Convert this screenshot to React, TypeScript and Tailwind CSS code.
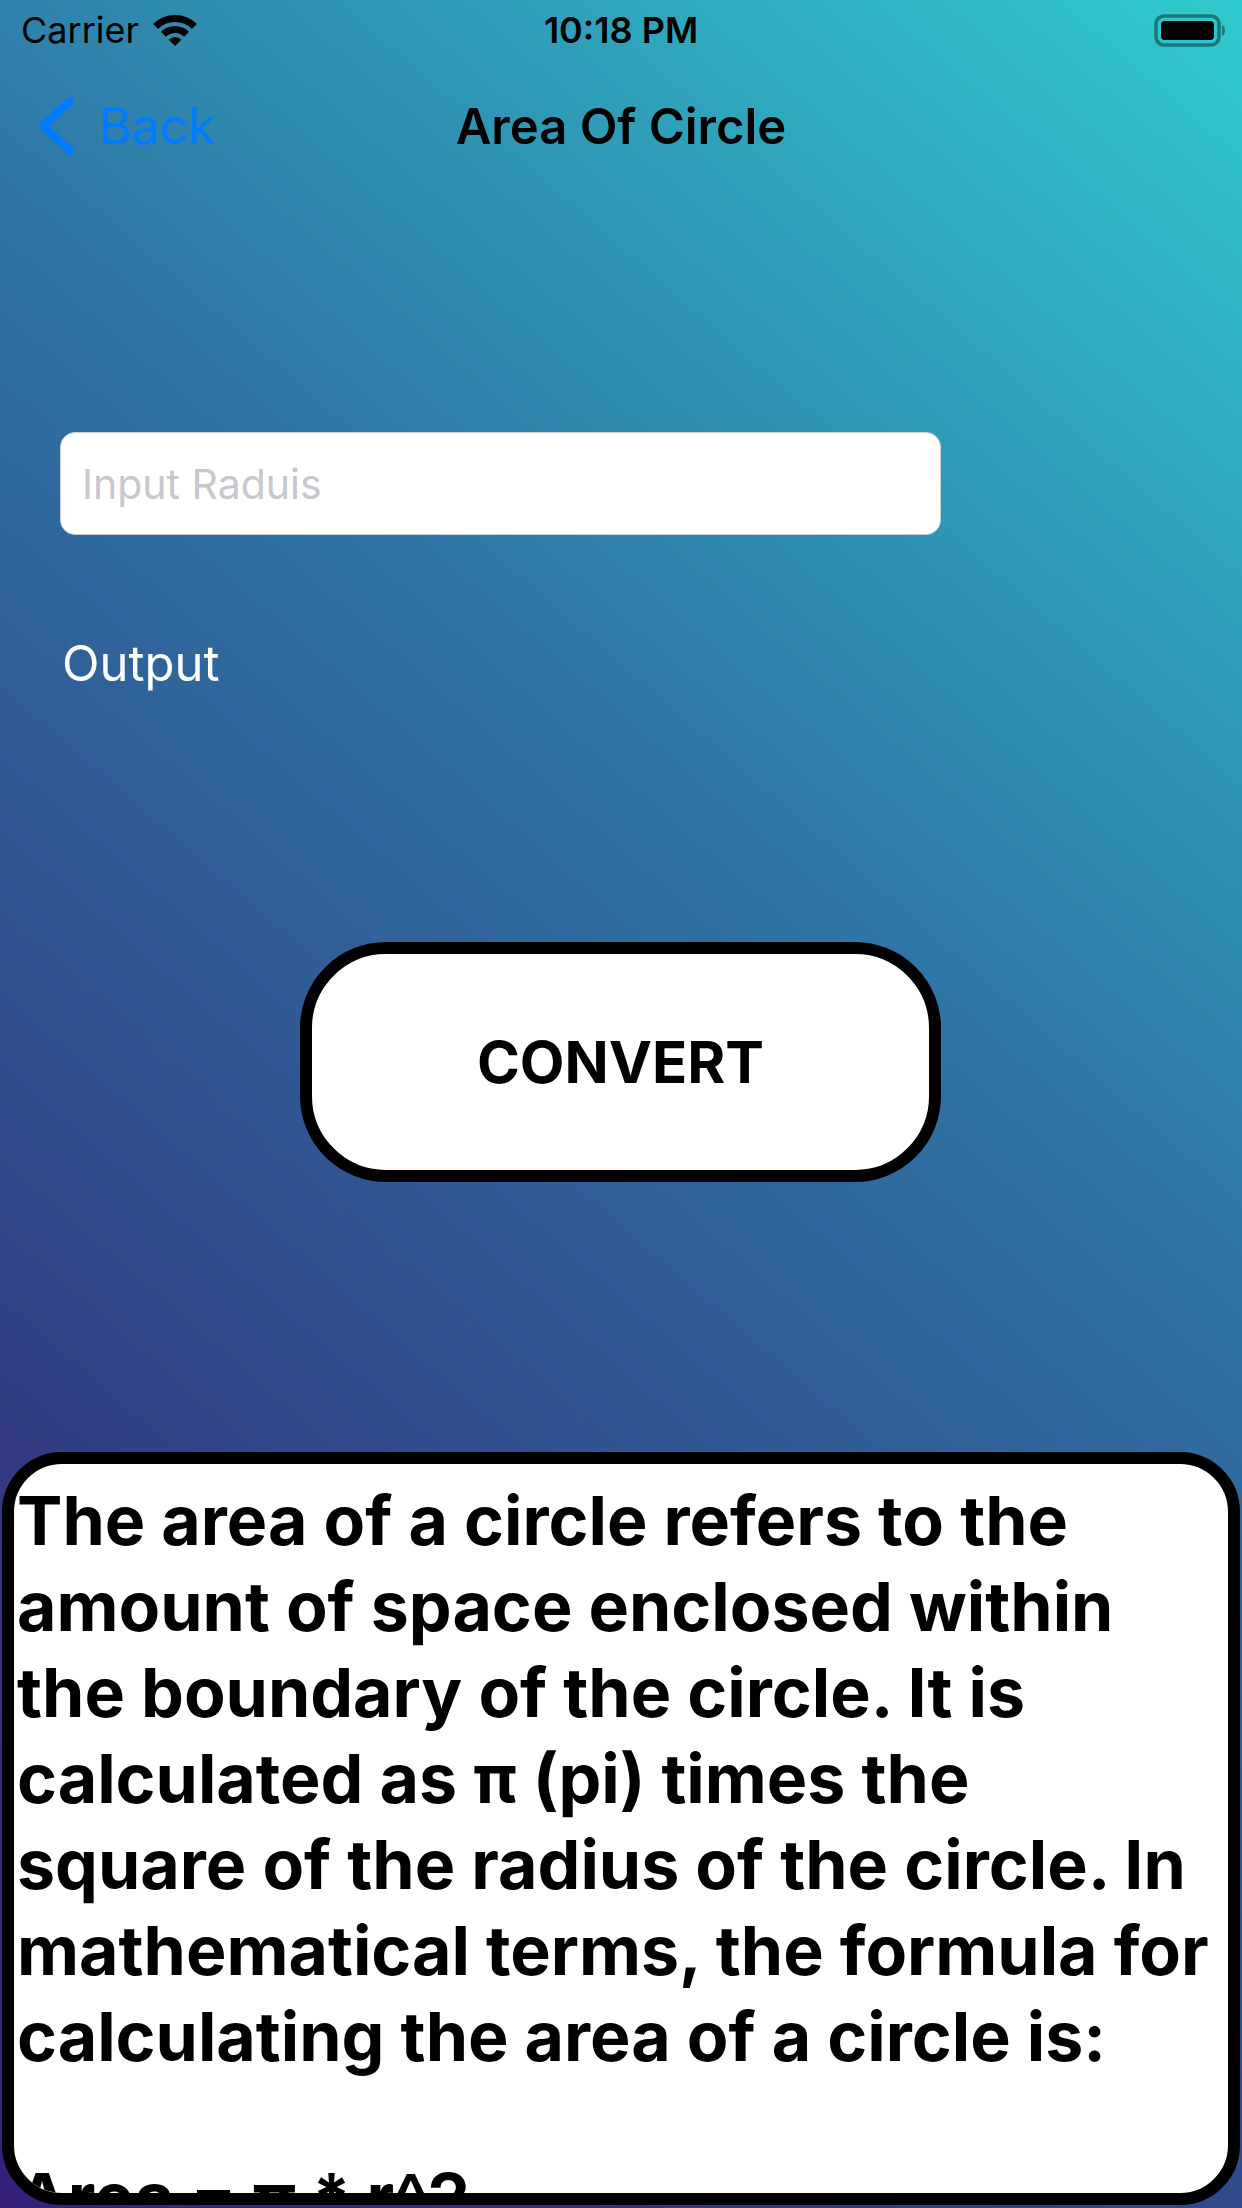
import React from "react";

const infoLines = [
  "The area of a circle refers to the",
  "amount of space enclosed within",
  "the boundary of the circle. It is",
  "calculated as π (pi) times the",
  "square of the radius of the circle. In",
  "mathematical terms, the formula for",
  "calculating the area of a circle is:",
];

// status bar wifi glyph, three bands fanning out from the bottom point
const WifiIcon = () => (
  <svg width="44" height="33" viewBox="0 0 44 33" fill="black">
    <path d="M0.08 10.08 A31 31 0 0 1 43.92 10.08 L38.97 15.03 A24 24 0 0 0 5.03 15.03 Z" />
    <path d="M7.86 17.86 A20 20 0 0 1 36.14 17.86 L31.19 22.81 A13 13 0 0 0 12.81 22.81 Z" />
    <path d="M22 32 L15.64 25.64 A9 9 0 0 1 28.36 25.64 Z" />
  </svg>
);

const BatteryIcon = () => (
  <svg width="74" height="33" viewBox="0 0 74 33">
    <rect x="2" y="2" width="63" height="29" rx="8" fill="none" stroke="rgba(0,0,0,0.4)" strokeWidth="3.5" />
    <rect x="7" y="7" width="53" height="19" rx="4" fill="black" />
    <path d="M68 11 C72 12 72 21 68 22 Z" fill="rgba(0,0,0,0.4)" />
  </svg>
);

const StatusBar = () => (
  <div className="grid h-[60px] grid-cols-[1fr_auto_1fr] items-center px-[21px] text-[36px] text-black">
    <div className="flex items-center gap-[14px]">
      <span className="font-normal leading-none">Carrier</span>
      <WifiIcon />
    </div>
    <span className="font-semibold leading-none">10:18 PM</span>
    <div className="-mr-[7px] flex justify-end">
      <BatteryIcon />
    </div>
  </div>
);

const NavBar = () => (
  <div className="grid h-[132px] grid-cols-[1fr_auto_1fr] items-center">
    <button className="flex items-center gap-[24px] pl-[37px] text-[50px] leading-none text-[#007aff]">
      <svg width="38" height="58" viewBox="0 0 38 58">
        <polyline
          points="33,4 6,29 33,54"
          fill="none"
          stroke="#007aff"
          strokeWidth="8"
          strokeLinecap="round"
          strokeLinejoin="round"
        />
      </svg>
      <span>Back</span>
    </button>
    <h1 className="text-[49px] font-semibold leading-none text-black">Area Of Circle</h1>
    <div />
  </div>
);

export default function App() {
  return (
    <div className="flex h-[2208px] w-[1242px] flex-col overflow-hidden bg-[linear-gradient(41deg,#36207a_0%,#323c82_24%,#2f72a4_60%,#2fcacd_100%)] font-['Inter','Liberation_Sans',sans-serif]">
      <StatusBar />
      <NavBar />

      <input
        type="text"
        placeholder="Input Raduis"
        className="ml-[60px] mt-[240px] h-[103px] w-[881px] rounded-[15px] border border-[#cfcfd4] bg-white pl-[21px] text-[41px] text-black outline-none placeholder:text-[#c7c7cd]"
      />

      <div className="ml-[62px] mt-[98px] text-[49px] leading-[61px] text-white">Output</div>

      <button className="ml-[300px] mt-[248px] flex h-[240px] w-[641px] items-center justify-center rounded-[86px] border-[12px] border-black bg-white text-[58px] font-bold text-black">
        CONVERT
      </button>

      <div className="mx-[2px] mt-[270px] h-[753px] shrink-0 overflow-hidden rounded-[60px] border-[12px] border-black bg-white px-[3px] pt-[13px] text-[68px] font-bold leading-[86px] text-black">
        {infoLines.map((line, i) => (
          <div key={i} className="whitespace-nowrap">
            {line}
          </div>
        ))}
        <div className="h-[75px]" />
        <div className="whitespace-nowrap">Area = π * r^2</div>
      </div>
    </div>
  );
}
